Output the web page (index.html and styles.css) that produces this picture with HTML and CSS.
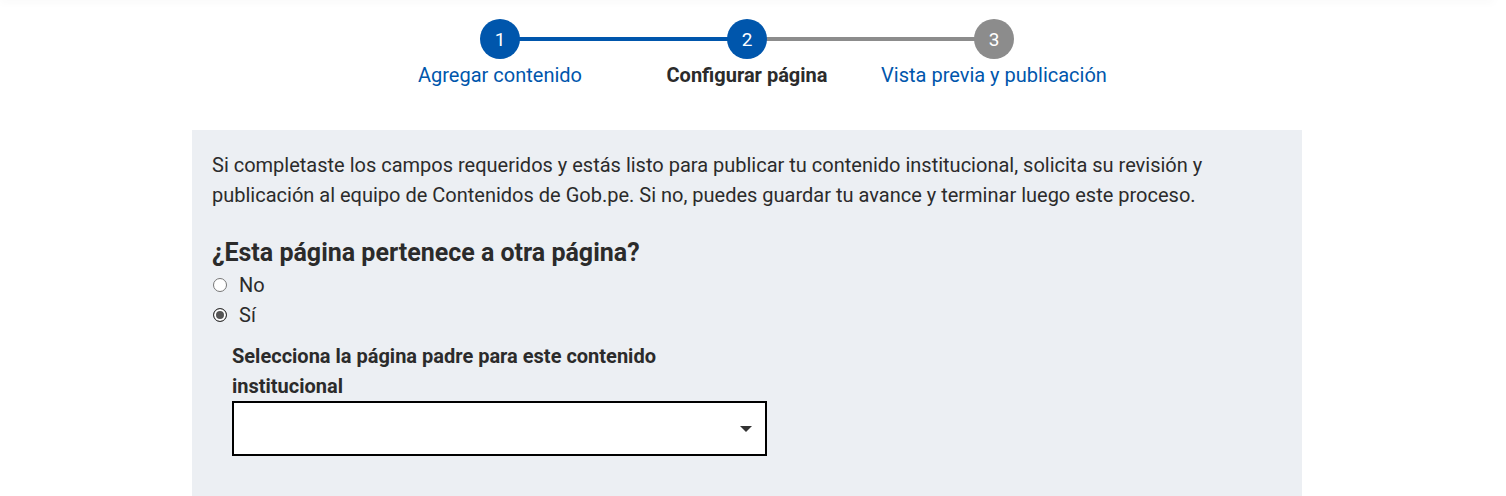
FILE: index.html
```html
<!DOCTYPE html>
<html>
<head>
<meta charset="UTF-8">
<title>Configurar página</title>
<link rel="stylesheet" href="styles.css">
</head>
<body>
	<div class="topbar"></div>
	<div class="page">
		<ol class="steps">
			<li class="step done">
				<span class="dot">1</span>
				<a href="#">Agregar contenido</a>
			</li>
			<li class="step current">
				<span class="dot">2</span>
				<span class="name">Configurar página</span>
			</li>
			<li class="step">
				<span class="dot">3</span>
				<a href="#">Vista previa y publicación</a>
			</li>
		</ol>

		<div class="panel">
			<p class="intro">Si completaste los campos requeridos y estás listo para publicar tu contenido institucional, solicita su revisión y publicación al equipo de Contenidos de Gob.pe. Si no, puedes guardar tu avance y terminar luego este proceso.</p>

			<h2 class="question">¿Esta página pertenece a otra página?</h2>
			<label class="radio"><input type="radio" name="parent" value="no"> No</label>
			<label class="radio"><input type="radio" name="parent" value="si" checked> Sí</label>

			<div class="field">
				<label class="field-label" for="padre">Selecciona la página padre para este contenido institucional</label>
				<div class="select">
					<select id="padre"><option></option></select>
				</div>
			</div>
		</div>
	</div>
</body>
</html>
```

FILE: styles.css
```css
/* base */
body {
	margin: 0;
	padding-right: 12px;
	background-color: #ffffff;
	color: #2b2b2b;
	font-family: Roboto, "Liberation Sans", Arial, sans-serif;
	font-size: 20px;
	overflow: hidden;
}

.topbar {
	height: 1px;
	margin-top: -1px;
	box-shadow: 0 0 8px rgba(0, 0, 0, 0.18);
}

.page {
	width: 1110px;
	margin: 0 auto;
}

/* pasos */
.steps {
	display: flex;
	justify-content: center;
	margin: 0;
	padding: 19px 0 0;
	list-style: none;
}

.step {
	position: relative;
	display: flex;
	flex-direction: column;
	align-items: center;
	width: 247px;
}

.step .dot {
	position: relative;
	z-index: 1;
	display: flex;
	align-items: center;
	justify-content: center;
	width: 40px;
	height: 40px;
	border-radius: 50%;
	background-color: #8c8c8c;
	color: #ffffff;
	font-size: 19px;
}

.step.done .dot,
.step.current .dot {
	background-color: #0056ac;
}

/* linea entre pasos */
.step + .step::before {
	content: "";
	position: absolute;
	top: 18px;
	right: 50%;
	width: 247px;
	height: 4px;
	background-color: #8c8c8c;
}

.step.current::before {
	background-color: #0056ac;
}

.step a {
	margin-top: 3px;
	line-height: 26px;
	color: #0056ac;
	text-decoration: none;
	white-space: nowrap;
}

.step .name {
	margin-top: 3px;
	line-height: 26px;
	font-weight: 700;
	white-space: nowrap;
}

/* panel */
.panel {
	margin-top: 42px;
	padding: 20px 20px 60px;
	background-color: #eceff3;
	min-height: 400px;
}

.intro {
	margin: 0;
	line-height: 30px;
}

.question {
	margin: 28px 0 0;
	font-size: 25px;
	line-height: 30px;
	font-weight: 700;
}

.radio {
	display: flex;
	align-items: center;
	line-height: 30px;
	padding-top: 2px;
	margin-bottom: -2px;
}

.radio input {
	appearance: none;
	width: 14px;
	height: 14px;
	margin: 0 12px 1px 1px;
	border: 1px solid #767676;
	border-radius: 50%;
	background-color: #ffffff;
}

.radio input:checked {
	border-color: #333333;
	background-color: #555555;
	box-shadow: inset 0 0 0 2px #ffffff;
}

.field {
	width: 535px;
	margin: 13px 0 0 20px;
}

.field-label {
	display: block;
	line-height: 30px;
	font-weight: 700;
	padding-right: 60px;
}

.select {
	position: relative;
}

.select select {
	appearance: none;
	display: block;
	width: 100%;
	height: 55px;
	border: 2px solid #000000;
	border-radius: 0;
	background-color: #ffffff;
	font-family: inherit;
	font-size: 20px;
}

.select::after {
	content: "";
	position: absolute;
	top: 25px;
	right: 15px;
	border-top: 6px solid #333333;
	border-left: 6px solid transparent;
	border-right: 6px solid transparent;
}
```
